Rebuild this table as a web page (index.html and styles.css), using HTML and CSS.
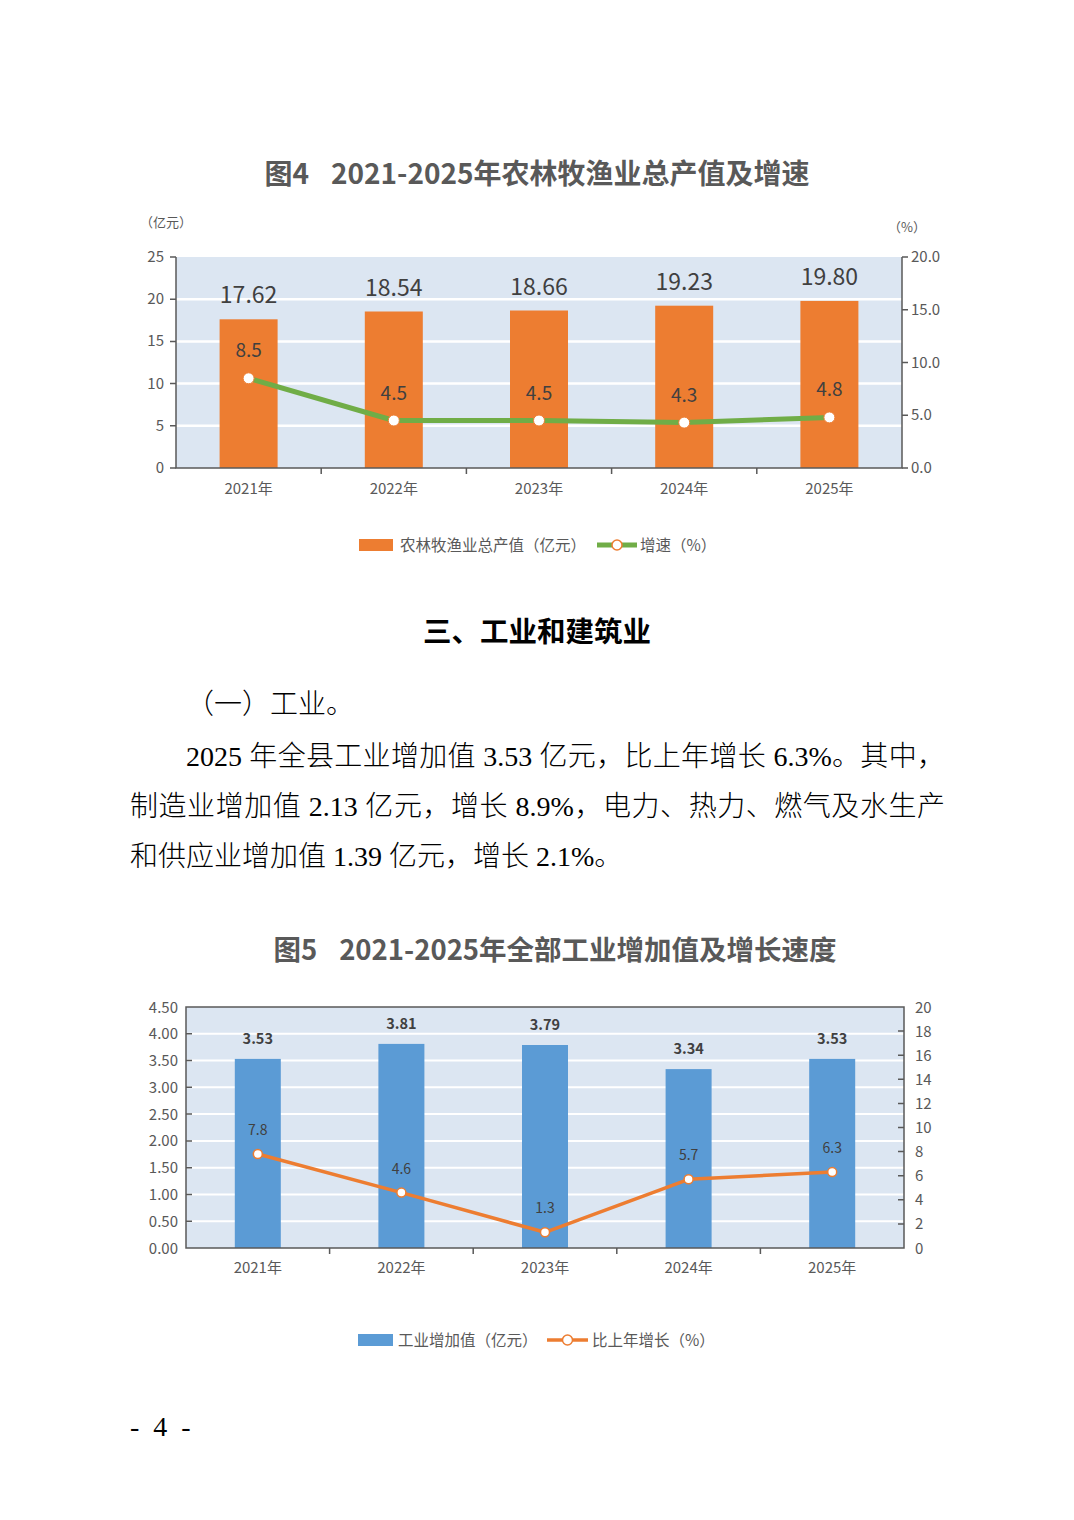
FILE: index.html
```html
<!DOCTYPE html>
<html lang="zh-CN">
<head>
<meta charset="utf-8">
<title>第4页</title>
<link rel="stylesheet" href="styles.css">
</head>
<body>
<main class="page">
  <section class="figure fig4">
    <h2 class="fig-title">图4<span class="gap"></span>2021-2025年农林牧渔业总产值及增速</h2>
    <svg class="chart chart4" width="1074" height="370" viewBox="0 0 1074 370">
      <text class="unit" x="140" y="27">（亿元）</text>
      <text class="unit" x="888" y="32">（%）</text>
      <rect class="plot-bg" x="176" y="57" width="726" height="211"/>
      <path class="grid" d="M176 99.2H902M176 141.4H902M176 183.6H902M176 225.8H902"/>
      <g class="bars-orange">
        <rect x="219.6" y="119.3" width="58" height="148.7"/>
        <rect x="364.8" y="111.5" width="58" height="156.5"/>
        <rect x="510" y="110.5" width="58" height="157.5"/>
        <rect x="655.2" y="105.7" width="58" height="162.3"/>
        <rect x="800.4" y="100.9" width="58" height="167.1"/>
      </g>
      <path class="axis" d="M176 57V268H902V57"/>
      <path class="axis" d="M170 57H176M170 99.2H176M170 141.4H176M170 183.6H176M170 225.8H176M170 268H176M902 57H908M902 109.75H908M902 162.5H908M902 215.25H908M902 268H908M321.2 268V274M466.4 268V274M611.6 268V274M756.8 268V274"/>
      <g class="tick-label end">
        <text x="164" y="62">25</text>
        <text x="164" y="104">20</text>
        <text x="164" y="146">15</text>
        <text x="164" y="189">10</text>
        <text x="164" y="231">5</text>
        <text x="164" y="273">0</text>
      </g>
      <g class="tick-label">
        <text x="911" y="62">20.0</text>
        <text x="911" y="115">15.0</text>
        <text x="911" y="167.5">10.0</text>
        <text x="911" y="220">5.0</text>
        <text x="911" y="273">0.0</text>
      </g>
      <g class="bar-value">
        <text x="248.6" y="103.3">17.62</text>
        <text x="393.8" y="95.5">18.54</text>
        <text x="539" y="94.5">18.66</text>
        <text x="684.2" y="89.7">19.23</text>
        <text x="829.4" y="84.9">19.80</text>
      </g>
      <polyline class="line-green" points="248.6,178.3 393.8,220.5 539,220.5 684.2,222.6 829.4,217.4"/>
      <g class="marker">
        <circle cx="248.6" cy="178.3" r="5.5"/>
        <circle cx="393.8" cy="220.5" r="5.5"/>
        <circle cx="539" cy="220.5" r="5.5"/>
        <circle cx="684.2" cy="222.6" r="5.5"/>
        <circle cx="829.4" cy="217.4" r="5.5"/>
      </g>
      <g class="line-value">
        <text x="248.6" y="157.3">8.5</text>
        <text x="393.8" y="199.5">4.5</text>
        <text x="539" y="199.5">4.5</text>
        <text x="684.2" y="201.6">4.3</text>
        <text x="829.4" y="196.4">4.8</text>
      </g>
      <g class="tick-label mid">
        <text x="248.6" y="294">2021年</text>
        <text x="393.8" y="294">2022年</text>
        <text x="539" y="294">2023年</text>
        <text x="684.2" y="294">2024年</text>
        <text x="829.4" y="294">2025年</text>
      </g>
      <rect class="legend-orange" x="359" y="339" width="34" height="12"/>
      <text class="legend-text" x="400" y="350.5">农林牧渔业总产值（亿元）</text>
      <path class="line-green" d="M597 345H637"/>
      <circle class="marker-legend" cx="617" cy="345" r="5"/>
      <text class="legend-text" x="640" y="350.5">增速（%）</text>
    </svg>
  </section>

  <h1 class="section-title">三、工业和建筑业</h1>
  <p class="subhead">（一）工业。</p>
  <p class="body-text">2025 年全县工业增加值 3.53 亿元，比上年增长 6.3%。其中，制造业增加值 2.13 亿元，增长 8.9%，电力、热力、燃气及水生产和供应业增加值 1.39 亿元，增长 2.1%。</p>

  <section class="figure fig5">
    <h2 class="fig-title fig-title-5">图5<span class="gap"></span>2021-2025年全部工业增加值及增长速度</h2>
    <svg class="chart chart5" width="1074" height="395" viewBox="0 0 1074 395">
      <rect class="plot-bg" x="186" y="32" width="718" height="241"/>
      <path class="grid thin" d="M186 246.2H904M186 219.4H904M186 192.7H904M186 165.9H904M186 139.1H904M186 112.3H904M186 85.5H904M186 58.8H904"/>
      <g class="bars-blue">
        <rect x="234.8" y="83.9" width="46" height="189.1"/>
        <rect x="378.4" y="68.9" width="46" height="204.1"/>
        <rect x="522" y="70" width="46" height="203"/>
        <rect x="665.6" y="94.1" width="46" height="178.9"/>
        <rect x="809.2" y="83.9" width="46" height="189.1"/>
      </g>
      <rect class="frame" x="186" y="32" width="718" height="241"/>
      <path class="axis" d="M186 58.8H192M186 85.5H192M186 112.3H192M186 139.1H192M186 165.9H192M186 192.7H192M186 219.4H192M186 246.2H192M898 248.9H904M898 224.8H904M898 200.7H904M898 176.6H904M898 152.5H904M898 128.4H904M898 104.3H904M898 80.2H904M898 56.1H904M329.6 273V279M473.2 273V279M616.8 273V279M760.4 273V279"/>
      <g class="tick-label end">
        <text x="178" y="37.5">4.50</text>
        <text x="178" y="64.3">4.00</text>
        <text x="178" y="91">3.50</text>
        <text x="178" y="117.8">3.00</text>
        <text x="178" y="144.6">2.50</text>
        <text x="178" y="171.4">2.00</text>
        <text x="178" y="198.2">1.50</text>
        <text x="178" y="224.9">1.00</text>
        <text x="178" y="251.7">0.50</text>
        <text x="178" y="278.5">0.00</text>
      </g>
      <g class="tick-label">
        <text x="915" y="37.5">20</text>
        <text x="915" y="61.6">18</text>
        <text x="915" y="85.7">16</text>
        <text x="915" y="109.8">14</text>
        <text x="915" y="133.9">12</text>
        <text x="915" y="158">10</text>
        <text x="915" y="182.1">8</text>
        <text x="915" y="206.2">6</text>
        <text x="915" y="230.3">4</text>
        <text x="915" y="254.4">2</text>
        <text x="915" y="278.5">0</text>
      </g>
      <g class="bar-value-bold">
        <text x="257.8" y="68.9">3.53</text>
        <text x="401.4" y="53.9">3.81</text>
        <text x="545" y="55">3.79</text>
        <text x="688.6" y="79.1">3.34</text>
        <text x="832.2" y="68.9">3.53</text>
      </g>
      <polyline class="line-orange" points="257.8,179 401.4,217.6 545,257.3 688.6,204.3 832.2,197.1"/>
      <g class="marker marker-o">
        <circle cx="257.8" cy="179" r="4.5"/>
        <circle cx="401.4" cy="217.6" r="4.5"/>
        <circle cx="545" cy="257.3" r="4.5"/>
        <circle cx="688.6" cy="204.3" r="4.5"/>
        <circle cx="832.2" cy="197.1" r="4.5"/>
      </g>
      <g class="line-value small">
        <text x="257.8" y="160">7.8</text>
        <text x="401.4" y="198.6">4.6</text>
        <text x="545" y="238.3">1.3</text>
        <text x="688.6" y="185.3">5.7</text>
        <text x="832.2" y="178.1">6.3</text>
      </g>
      <g class="tick-label mid">
        <text x="257.8" y="298">2021年</text>
        <text x="401.4" y="298">2022年</text>
        <text x="545" y="298">2023年</text>
        <text x="688.6" y="298">2024年</text>
        <text x="832.2" y="298">2025年</text>
      </g>
      <rect class="legend-blue" x="358" y="359" width="35" height="12"/>
      <text class="legend-text" x="398" y="370.5">工业增加值（亿元）</text>
      <path class="line-orange" d="M547 365H588"/>
      <circle class="marker-legend" cx="567.5" cy="365" r="5"/>
      <text class="legend-text" x="592" y="370.5">比上年增长（%）</text>
    </svg>
  </section>

  <footer class="page-num">- 4 -</footer>
</main>
</body>
</html>
```

FILE: styles.css
```css
html, body {
  margin: 0;
  padding: 0;
  background: #ffffff;
}

html {
  text-spacing-trim: space-all;
}

.page {
  width: 1074px;
  padding-top: 152px;
  box-sizing: border-box;
}

.figure {
  margin: 0;
}

.fig-title {
  margin: 0 0 8px 0;
  text-align: center;
  font-family: "Noto Sans CJK SC", sans-serif;
  font-weight: 700;
  font-size: 28px;
  line-height: 40px;
  color: #595959;
}

.fig-title .gap {
  display: inline-block;
  width: 22px;
}

.fig5 {
  margin-top: 46px;
}

.fig-title-5 {
  font-size: 27.5px;
  margin-bottom: 7px;
  padding-left: 36px;
}

.chart {
  display: block;
}

.section-title {
  margin: 40px 0 0 0;
  text-align: center;
  font-family: "Noto Sans CJK SC", sans-serif;
  font-weight: 700;
  font-size: 28.5px;
  line-height: 40px;
  color: #000000;
}

.subhead,
.body-text {
  margin: 0;
  padding: 0 129px 0 130px;
  font-family: "Liberation Serif", "Noto Sans CJK SC", serif;
  font-weight: 300;
  font-size: 28px;
  line-height: 50px;
  color: #000000;
  text-indent: 2em;
  text-align: justify;
}

.subhead {
  margin-top: 30px;
}

.body-text {
  margin-top: 2px;
}

.page-num {
  margin-top: 42px;
  padding-left: 130px;
  font-family: "Liberation Serif", serif;
  font-size: 28px;
  line-height: 30px;
  word-spacing: 7px;
  color: #000000;
}

/* chart parts */
.plot-bg {
  fill: #dce6f2;
}

.grid {
  fill: none;
  stroke: #ffffff;
  stroke-width: 2.5;
}

.grid.thin {
  stroke-width: 2;
}

.axis {
  fill: none;
  stroke: #595959;
  stroke-width: 1.5;
}

.frame {
  fill: none;
  stroke: #595959;
  stroke-width: 1.5;
}

.bars-orange rect,
.legend-orange {
  fill: #ed7d31;
}

.bars-blue rect,
.legend-blue {
  fill: #5b9bd5;
}

.line-green {
  fill: none;
  stroke: #70ad47;
  stroke-width: 5;
  stroke-linejoin: round;
}

.line-orange {
  fill: none;
  stroke: #ed7d31;
  stroke-width: 3.5;
  stroke-linejoin: round;
}

.marker circle {
  fill: #ffffff;
  stroke: #ed7d31;
  stroke-width: 1;
}

.marker-o circle {
  stroke-width: 1.5;
}

.marker-legend {
  fill: #ffffff;
  stroke: #ed7d31;
  stroke-width: 1.5;
}

.chart text {
  font-family: "Noto Sans CJK SC", sans-serif;
}

.tick-label text {
  font-size: 15px;
  fill: #595959;
}

.tick-label.end text {
  text-anchor: end;
}

.tick-label.mid text {
  text-anchor: middle;
}

.unit {
  font-size: 13px;
  fill: #595959;
}

.bar-value text {
  font-size: 23px;
  fill: #404040;
  text-anchor: middle;
}

.bar-value-bold text {
  font-size: 14.5px;
  font-weight: 700;
  fill: #404040;
  text-anchor: middle;
}

.line-value text {
  font-size: 19px;
  fill: #404040;
  text-anchor: middle;
}

.line-value.small text {
  font-size: 14px;
}

.legend-text {
  font-size: 15.5px;
  fill: #595959;
}
```
